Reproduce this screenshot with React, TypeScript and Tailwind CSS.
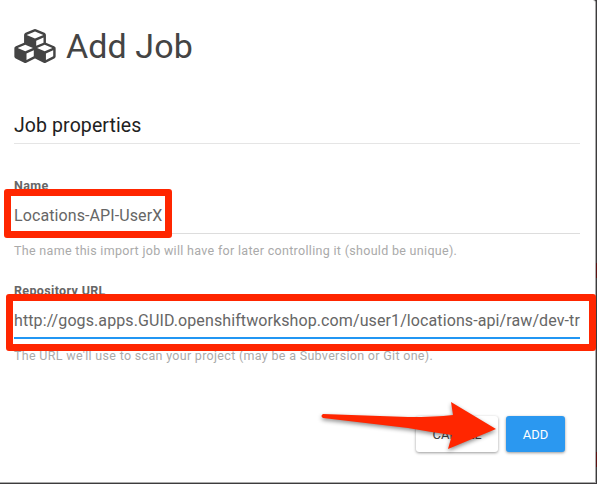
import React from "react";

function CubesIcon() {
  return (
    <svg viewBox="0 0 2176 1792" className="h-[34px] w-[42px] shrink-0" fill="currentColor" aria-hidden="true">
      <path d="M640 1632l384-192v-314l-384 164v342zm-64-454l404-173-404-173-404 173zm1088 454l384-192v-314l-384 164v342zm-64-454l404-173-404-173-404 173zm-448-293l384-165v-266l-384 164v267zm-64-379l441-189-441-189-441 189zm1088 518v416q0 36-19 67t-52 47l-448 224q-25 14-57 14t-57-14l-448-224q-5-2-7-4-2 2-7 4l-448 224q-25 14-57 14t-57-14l-448-224q-33-16-52-47t-19-67v-416q0-38 21.5-70t56.5-48l434-186v-400q0-38 21.5-70t56.5-48l448-192q23-10 50-10t50 10l448 192q35 16 56.5 48t21.5 70v400l434 186q36 16 57 48t21 70z" />
    </svg>
  );
}

type FieldProps = { label: string; value: string; help: string; active?: boolean };

function Field({ label, value, help, active = false }: FieldProps) {
  return (
    <div className="flex h-[105px] flex-col">
      <div className="h-5 text-[12.5px] leading-5 font-bold tracking-[0.35px] text-[#666]">{label}</div>
      <div
        className={`flex h-[38px] items-center pt-[3px] text-[16px] tracking-[0.1px] whitespace-nowrap text-[#666] ${
          active ? "border-b-2 border-[#2196f3]" : "border-b border-[#ddd]"
        }`}
      >
        {value}
      </div>
      <div className="mt-[7px] text-[12.5px] leading-5 tracking-[0.31px] whitespace-nowrap text-[#aaa]">{help}</div>
    </div>
  );
}

export default function App() {
  return (
    <div className="relative h-[484px] w-[597px] overflow-hidden bg-[#3d3b3d] bg-[linear-gradient(to_bottom,transparent_263px,#5c1010_263px,#5c1010_278px,transparent_278px,transparent_452px,#5c1010_452px,#5c1010_467px,transparent_467px)] font-['Roboto',sans-serif]">
      <main className="h-[483px] w-[596px] rounded-tr-[3px] border-r border-b border-[#aaa] bg-white pr-[15px] pl-[14px]">
        <header className="flex h-[92px] items-center gap-[10px] text-[#444]">
          <CubesIcon />
          <h1 className="text-[34px] leading-10 font-normal tracking-[0.1px]">Add Job</h1>
        </header>
        <h2 className="flex h-[52px] items-center border-b border-[#e5e5e5] pt-[16px] text-[19.5px] leading-6 tracking-[0.1px] text-[#212121]">
          Job properties
        </h2>
        <form className="pt-8">
          <Field label="Name" value="Locations-API-UserX" help="The name this import job will have for later controlling it (should be unique)." />
          <Field
            label="Repository URL"
            value="http://gogs.apps.GUID.openshiftworkshop.com/user1/locations-api/raw/dev-tr"
            help="The URL we'll use to scan your project (may be a Subversion or Git one)."
            active
          />
        </form>
        <footer className="flex justify-end gap-2 pt-[30px] pr-[15px]">
          <button type="button" className="h-9 w-[82px] rounded-[3px] bg-white pt-px text-[13px] text-[#444] shadow-[0_1px_3px_rgba(0,0,0,0.4)]">
            CANCEL
          </button>
          <button type="button" className="h-9 w-[59px] rounded-[3px] bg-[#2b98f0] pt-px text-[13px] text-white shadow-[0_1px_3px_rgba(0,0,0,0.4)]">
            ADD
          </button>
        </footer>
      </main>
      <div className="absolute top-[189px] left-[4px] h-[49px] w-[168px] rounded-[3px] border-[7px] border-[#ff2600]" />
      <div className="absolute top-[294px] left-[6px] h-[57px] w-[590px] rounded-[3px] border-[7px] border-[#ff2600]" />
      <svg
        viewBox="0 0 190 65"
        className="absolute top-[394px] left-[315px] h-[65px] w-[190px] drop-shadow-[0_2px_2px_rgba(0,0,0,0.45)]"
        aria-hidden="true"
      >
        <path d="M8 20L93 23Q120 23 138 21L136 8L181 35L133 55L137 41Q115 38 93 34L8 24Q5 22 8 20Z" fill="#ff2600" />
      </svg>
    </div>
  );
}
